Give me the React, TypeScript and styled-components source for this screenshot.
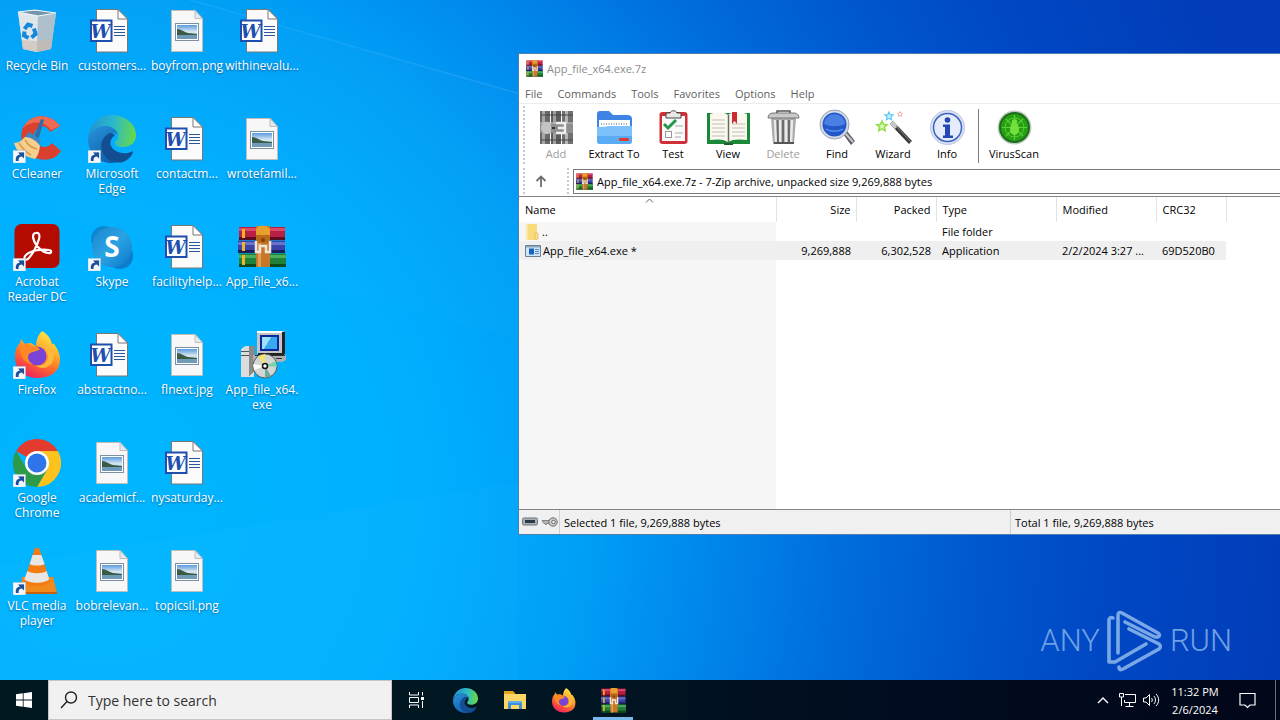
import React from "react";
import styled, { createGlobalStyle, css } from "styled-components";

const uiFont = '"Open Sans", "Noto Sans", sans-serif';

const GlobalStyle = createGlobalStyle`
  *, *::before, *::after { box-sizing: border-box; }
  html, body, #root { height: 100%; margin: 0; }
  body { font-family: ${uiFont}; font-size: 11px; color: #000; overflow: hidden; }
  button, input { font: inherit; color: inherit; }
  button { border: 0; padding: 0; background: none; cursor: default; }
  svg { display: block; flex: none; }
`;

const Screen = styled.div`
  display: flex;
  flex-direction: column;
  height: 100vh;
`;

const Desktop = styled.main`
  position: relative;
  flex: 1;
  min-height: 0;
  overflow: hidden;
  background: radial-gradient(
    ellipse 1300px 1400px at 8% 74%,
    #00b6ff 0%,
    #00b0ff 24%,
    #009ff6 37%,
    #0086eb 47%,
    #006ddd 57%,
    #0058cf 67%,
    #0048c5 77%,
    #023cb8 92%
  );
`;

const Beams = styled.svg`
  position: absolute;
  inset: 0;
  width: 100%;
  height: 100%;
`;

/* Desktop icons */

const IconGrid = styled.div`
  position: relative;
  display: grid;
  grid-auto-flow: column;
  grid-template-rows: repeat(6, 108px);
  grid-auto-columns: 74px;
  column-gap: 1px;
  justify-content: start;
`;

const DesktopItem = styled.button`
  display: flex;
  flex-direction: column;
  align-items: center;
  justify-content: flex-start;
  gap: 3px;
  padding-top: 7px;
`;

const DesktopLabel = styled.span`
  color: #fff;
  font-size: 12px;
  line-height: 15px;
  text-align: center;
  white-space: pre;
  text-shadow: 0 1px 2px rgba(0, 40, 90, 0.6);
`;

/* Archive window */

const Window = styled.section`
  position: absolute;
  top: 53px;
  left: 518px;
  right: 0;
  height: 482px;
  display: flex;
  flex-direction: column;
  background: #fff;
  border: solid #4f7fae;
  border-width: 1px 0 1px 1px;
`;

const TitleBar = styled.header`
  display: flex;
  align-items: center;
  gap: 4px;
  height: 29px;
  padding-left: 7px;
  color: #8b8b8b;
`;

const Title = styled.h1`
  margin: 0;
  font-size: 11px;
  font-weight: 400;
`;

const MenuBar = styled.nav`
  display: flex;
  gap: 15px;
  height: 21px;
  padding-left: 6px;
  border-bottom: 1px solid #ededed;
  color: #5f5f5f;
`;

const Tools = styled.div`
  display: flex;
  height: 62px;
  padding-left: 4px;
`;

const Grip = styled.span`
  flex: none;
  width: 2px;
  margin: 2px 0 0;
  background: repeating-linear-gradient(#c3cbd2 0 2px, transparent 2px 4px);
`;

const ToolList = styled.div`
  display: flex;
  padding: 5px 0 0 2px;
`;

const Tool = styled.button<{ $width: number }>`
  display: flex;
  flex-direction: column;
  align-items: center;
  width: ${(p) => p.$width}px;
  line-height: 16px;
  white-space: nowrap;
  &:disabled { color: #9d9d9d; }
`;

const ToolRule = styled.span`
  width: 1px;
  height: 54px;
  margin-left: 9px;
  background: #7d7d7d;
`;

const AddressRow = styled.div`
  display: flex;
  height: 30px;
  padding-left: 4px;
`;

const UpButton = styled.button`
  display: grid;
  place-items: center;
  width: 32px;
  margin-right: 10px;
`;

const AddressBox = styled.label`
  display: flex;
  flex: 1;
  align-items: center;
  gap: 4px;
  height: 25px;
  margin: 3px 0 0 4px;
  padding-left: 2px;
  border: 1px solid #7a7a7a;
  border-right: 0;
`;

const AddressInput = styled.input`
  flex: 1;
  min-width: 0;
  border: 0;
  padding: 0;
  outline: 0;
  background: none;
`;

const ListPane = styled.div`
  flex: 1;
  min-height: 0;
  border: solid #7f858b;
  border-width: 1px 0;
  background: linear-gradient(#f6f6f6, #f6f6f6) 0 25px / 257px 100% no-repeat #fff;
`;

const FileTable = styled.table`
  width: 707px;
  table-layout: fixed;
  border-collapse: collapse;
`;

const Col = styled.col<{ $width: number }>`
  width: ${(p) => p.$width}px;
`;

const cellText = css<{ $right?: boolean }>`
  padding: 0 5px 0 6px;
  font-weight: 400;
  text-align: ${(p) => (p.$right ? "right" : "left")};
  white-space: nowrap;
`;

const HeadCell = styled.th<{ $right?: boolean }>`
  ${cellText}
  position: relative;
  height: 25px;
  border-right: 1px solid #e2e2e2;
  background: #fff;
`;

const SortMark = styled.svg`
  position: absolute;
  top: 1px;
  left: 49%;
`;

const Row = styled.tr<{ $selected?: boolean }>`
  height: 19px;
  background: ${(p) => (p.$selected ? "#efefef" : "transparent")};
`;

const Cell = styled.td<{ $right?: boolean }>`
  ${cellText}
`;

const FileName = styled.span`
  display: flex;
  align-items: center;
  gap: 2px;
`;

const StatusBar = styled.footer`
  display: flex;
  align-items: stretch;
  height: 24px;
  background: #f0f0f0;
  line-height: 26px;
`;

const StatusIcons = styled.span`
  display: flex;
  align-items: center;
  gap: 3px;
  width: 41px;
  padding-left: 3px;
  border-right: 1px solid #d0d0d0;
`;

const StatusText = styled.span<{ $width?: number }>`
  width: ${(p) => (p.$width ? `${p.$width}px` : "auto")};
  padding-left: 4px;
  border-right: ${(p) => (p.$width ? "1px solid #d0d0d0" : "0")};
`;

/* Watermark */

const Watermark = styled.div`
  position: absolute;
  right: 48px;
  bottom: 8px;
  display: flex;
  align-items: center;
  gap: 7px;
  color: #6fa0e4;
  font-family: Roboto, "Liberation Sans", sans-serif;
  font-size: 31px;
  font-weight: 300;
  line-height: 62px;
`;

/* Taskbar */

const Taskbar = styled.footer`
  display: flex;
  height: 40px;
  background: linear-gradient(90deg, #021820, #011722 40%, #010c20 70%, #020719);
  color: #fff;
`;

const StartButton = styled.button`
  display: grid;
  place-items: center;
  width: 48px;
`;

const SearchBox = styled.label`
  display: flex;
  align-items: center;
  gap: 10px;
  width: 344px;
  padding-left: 11px;
  border: 1px solid #c4c6c7;
  background: #f1f1f1;
  color: #222;
`;

const SearchInput = styled.input`
  flex: 1;
  min-width: 0;
  border: 0;
  padding: 0;
  outline: 0;
  background: none;
  font-size: 14px;
  &::placeholder { color: #333; opacity: 1; }
`;

const TaskButton = styled.button<{ $active?: boolean }>`
  display: grid;
  place-items: center;
  width: 49px;
  border: solid transparent;
  border-width: 3px 4px;
  ${(p) =>
    p.$active &&
    css`
      width: 40px;
      margin-left: 5px;
      border-width: 3px 0;
      border-bottom-color: #76b9ed;
    `}
`;

const Tray = styled.div`
  display: flex;
  margin-left: auto;
`;

const TrayButton = styled.button<{ $width: number }>`
  display: grid;
  place-items: center;
  width: ${(p) => p.$width}px;
`;

const Clock = styled.button`
  width: 64px;
  padding-top: 2px;
  line-height: 18px;
  white-space: pre;
`;

const PeekButton = styled.button`
  width: 5px;
  margin-left: 8px;
  border-left: 1px solid #6a6f7b;
`;

/* Drawings */

const Shortcut = () => (
  <g>
    <rect x="0" y="35.500" width="12.500" height="12.500" fill="#f4f8fc" stroke="#b5c7d8" strokeWidth=".6" />
    <path d="M3 46c-.7-4 .8-6 3.600-6.300V37.800h4.500v4.800l-1.700-1.300C6.500 41.600 5.200 43 5.600 46z" fill="#1c4f9c" />
    <path d="M5 37.500h6v6z" fill="#1c4f9c" />
  </g>
);

const RecycleBin = () => (
  <svg width="48" height="48" viewBox="0 0 48 48">
    <path d="M5 5l17-2 21 3-5 36-14 3-14-3z" fill="#b9cfdd" />
    <path d="M5 5l20 3-1 37-14-3z" fill="#dfe6ea" />
    <path d="M25 8l18-2-5 36-14 3z" fill="#adc0cc" />
    <path d="M5 5l17-2 21 3-18 3z" fill="#7496aa" stroke="#f3f8fb" strokeWidth="1.200" />
    <path d="M8.500 33l15.500 1 15-2-1.500 10-13.500 3-14-3z" fill="#cbb9aa" opacity=".6" />
    <g fill="none" stroke="#1688dc" strokeWidth="4">
      <path d="M11.500 22l3.500-4.500 4.500 1.500" />
      <path d="M21 21.500l1.500 5.500-4 3.500" />
      <path d="M15.500 31l-4.500-2.500.500-4" />
    </g>
  </svg>
);

const CCleaner = () => (
  <svg width="48" height="48" viewBox="0 0 48 48">
    <path d="M47 11C40 2 30-1 20 3 9 8 6 19 10 30s17 17 27 14c5-1 8-4 11-8l-9-8c-4 5-10 5-14 1-5-5-5-12-1-15 5-4 10-3 13 3z" fill="#d9402f" />
    <path d="M47 11C40 2 30-1 20 3c-5 2-8 6-10 10 8-7 20-8 28 2z" fill="#ee6a50" />
    <path d="M28 4l3 1-7 24-5-2z" fill="#2e6da6" />
    <path d="M16 17c4 2 9 5 12 9l-3 4-13-8z" fill="#3c87c2" />
    <path d="M12 22c6 0 12 4 15 9-1 6-2 10-5 13C9 41 3 36 1 28c5 0 8-3 11-6z" fill="#f4cf8d" />
    <path d="M6 28c3 5 7 9 12 12M12 25c3 5 7 8 12 9" stroke="#d69c4c" strokeWidth="1.500" fill="none" />
    <Shortcut />
  </svg>
);

const EdgeArt = () => (
  <>
    <defs>
      <linearGradient id="edgeTop" x1="0" y1=".4" x2="1" y2=".5">
        <stop offset="0" stopColor="#2492cf" />
        <stop offset=".5" stopColor="#29b8cd" />
        <stop offset="1" stopColor="#66d948" />
      </linearGradient>
      <linearGradient id="edgeLeft" x1="0" y1="0" x2=".6" y2="1">
        <stop offset="0" stopColor="#2a94db" />
        <stop offset="1" stopColor="#0f5fae" />
      </linearGradient>
    </defs>
    <path d="M0 23C1 10 11 0 24 0s24 9 24 20c0 8-6 12-13 12-6 0-8-2-8-4s3-3 3-7c0-6-6-10-13-10C9 11 3 15 0 23z" fill="url(#edgeTop)" />
    <path d="M0 24C2 16 9 11 17 11c7 0 12 4 13 9-3-3-8-3-11 0-4 4-4 11 0 17 3 5 8 8 14 8-3 2-6 3-9 3C11 48 0 38 0 24z" fill="url(#edgeLeft)" />
    <path d="M20 19c-6 4-8 11-6 17 3 9 13 13 21 11 5-2 9-6 10-10 0-1-1-1-2 0-8 3-17 0-20-6-2-5 1-8 4-11-2-2-5-3-7-1z" fill="#134e92" />
  </>
);

const EdgeIcon = () => (
  <svg width="48" height="48" viewBox="0 0 48 48">
    <EdgeArt />
    <Shortcut />
  </svg>
);

const EdgeSmall = () => (
  <svg width="25" height="25" viewBox="0 0 48 48">
    <EdgeArt />
  </svg>
);

const Acrobat = () => (
  <svg width="48" height="48" viewBox="0 0 48 48">
    <rect x="1.500" y="1" width="45" height="44" rx="7" fill="#b30b00" />
    <path d="M23 10c3-1 4 2 3 6-2 8-8 17-11 20-3 2-5-1-2-4 5-5 16-6 23-5 3 0 3 4-1 3-7-1-14-9-15-16 0-2 1-4 3-4z" fill="none" stroke="#fff" strokeWidth="2.200" />
    <Shortcut />
  </svg>
);

const Skype = () => (
  <svg width="48" height="48" viewBox="0 0 48 48">
    <defs>
      <linearGradient id="skype" x1="0" y1="0" x2="1" y2="1">
        <stop offset="0" stopColor="#1b86cc" />
        <stop offset=".5" stopColor="#2ba3e3" />
        <stop offset="1" stopColor="#0a79c9" />
      </linearGradient>
    </defs>
    <circle cx="16" cy="16" r="13" fill="#0f86d2" />
    <circle cx="32" cy="33" r="13" fill="#0c7dcc" />
    <circle cx="24" cy="24" r="20" fill="url(#skype)" />
    <text x="24" y="34" textAnchor="middle" fontFamily="Open Sans, sans-serif" fontWeight="700" fontSize="28" fill="#fff">S</text>
    <Shortcut />
  </svg>
);

const FirefoxArt = () => (
  <>
    <defs>
      <linearGradient id="fox" x1=".8" y1="0" x2=".3" y2="1">
        <stop offset="0" stopColor="#fff04a" />
        <stop offset=".35" stopColor="#ffb02c" />
        <stop offset=".65" stopColor="#ff6a2b" />
        <stop offset="1" stopColor="#ec1f63" />
      </linearGradient>
    </defs>
    <path d="M29 0c7 4 9 9 10 13 2-1 3 1 4 3 4 6 5 13 3 19-3 8-11 12-21 12C12 47 2 39 2 26c0-7 2-11 5-14l1-4 4 5c2-1 4-1 6-1l5 3c0-6 2-11 6-15z" fill="url(#fox)" />
    <circle cx="24" cy="25" r="9.500" fill="#7a43d6" />
    <path d="M7 16c3-3 8-4 12-1 4 0 6 1 8 3-3 3-8 2-11 5-2 3-1 8 4 10-8 0-13-7-13-17z" fill="#ff8a25" />
    <path d="M24 15c6-1 11 4 11 10 0 7-6 11-13 9 8 7 19 1 19-9 0-8-8-14-17-10z" fill="#ffb83a" />
  </>
);

const Firefox = () => (
  <svg width="48" height="48" viewBox="0 0 48 48">
    <FirefoxArt />
    <Shortcut />
  </svg>
);

const FirefoxSmall = () => (
  <svg width="25" height="25" viewBox="0 0 48 48">
    <FirefoxArt />
  </svg>
);

const Chrome = () => (
  <svg width="48" height="48" viewBox="0 0 48 48">
    <path d="M24 24L3.200 12A24 24 0 0 1 44.800 12z" fill="#e33b2e" />
    <path d="M24 12h20.800A24 24 0 0 1 24 48l10.400-18z" fill="#fcc31e" />
    <path d="M3.200 12A24 24 0 0 0 24 48l10.400-18H13.600z" fill="#2c9a47" />
    <circle cx="24" cy="24" r="12" fill="#fff" />
    <circle cx="24" cy="24" r="9.500" fill="#2f74e8" />
    <Shortcut />
  </svg>
);

const Vlc = () => (
  <svg width="48" height="48" viewBox="0 0 48 48">
    <path d="M9 30h31l4 16H8z" fill="#f08a1c" />
    <path d="M8 45h36v2H8z" fill="#c8600c" />
    <path d="M22 1h4l11 33c-2 7-24 7-26 0z" fill="#f57c12" />
    <path d="M19.600 8h8.800l3.200 9c-3 2-12 2-15 0z" fill="#e9e6e3" />
    <path d="M14.500 24c4 3 15 3 19 0l2.800 8c-4 5-21 5-25 0z" fill="#e9e6e3" />
    <Shortcut />
  </svg>
);

const WordFile = () => (
  <svg width="48" height="48" viewBox="0 0 48 48">
    <path d="M8.500 2.500h21.500l9.500 9.500v33h-31z" fill="#fbfbfb" stroke="#777" />
    <path d="M30 2.500v9.500h9.500z" fill="#fff" stroke="#777" />
    <path d="M26 19.500h11M26 22.500h11M26 25.500h11M26 28.500h11" stroke="#2b579a" />
    <rect x="3" y="13.500" width="20.500" height="20.500" fill="#fff" stroke="#1f4fae" strokeWidth="2" />
    <text x="12.500" y="30.500" textAnchor="middle" fontFamily="DejaVu Serif, serif" fontWeight="700" fontStyle="italic" fontSize="18" fill="#1f4fae">W</text>
  </svg>
);

const ImageFile = () => (
  <svg width="48" height="48" viewBox="0 0 48 48">
    <defs>
      <linearGradient id="photoSky" x1="0" y1="0" x2="0" y2="1">
        <stop offset="0" stopColor="#5a9be0" />
        <stop offset=".5" stopColor="#dceaf2" />
        <stop offset="1" stopColor="#5e88a8" />
      </linearGradient>
    </defs>
    <path d="M8.500 3.500h23.500l7.500 8v33h-31z" fill="#f7f7f7" stroke="#c2bdb8" />
    <path d="M32 3.500v8h7.500z" fill="#dfeaf2" stroke="#c2bdb8" />
    <rect x="12.500" y="16.500" width="23" height="17" fill="#fff" stroke="#7d8fa0" />
    <rect x="14" y="18" width="20" height="14" fill="url(#photoSky)" />
    <path d="M14 22c4 0 7 3 11 4l9 1v1H14z" fill="#3a5c46" />
    <path d="M14 28h20v4H14z" fill="#6f9ab8" />
  </svg>
);

const RarArt = () => (
  <>
    <path d="M1 4h46v13H1z" fill="#b81f42" />
    <path d="M1 5h46v3H1z" fill="#dc4a68" />
    <path d="M1 14h46v3H1z" fill="#5d0d20" />
    <path d="M0 17.500h47v12.500H0z" fill="#3a43a8" />
    <path d="M0 19h47v3H0z" fill="#6a72cc" />
    <path d="M0 27h47v3H0z" fill="#1b1f5a" />
    <path d="M1 30.500h47v13.500H1z" fill="#1f8238" />
    <path d="M1 32h47v3H1z" fill="#4fae5c" />
    <path d="M1 41h47v3H1z" fill="#0c4a1d" />
    <path d="M4 6h3v9H4zM4 19h3v9H4zM4 32h3v10H4z" fill="#f0b428" />
    <path d="M18 3h14v41H18z" fill="#c8772a" />
    <path d="M20 3h3v41h-3z" fill="#e2a055" />
    <path d="M18 8c0-7 14-7 14 0v9H18z" fill="#e8a02c" />
    <path d="M18 12h14v8H18z" fill="#b86a18" />
    <path d="M18 18v11h4v-6h6v6h4V18" fill="none" stroke="#eee6dc" strokeWidth="2.500" />
    <circle cx="25" cy="17" r="2" fill="#8a3c10" />
  </>
);

const RarIcon = ({ size }: { size: number }) => (
  <svg width={size} height={size} viewBox={size === 48 ? "0 0 48 48" : "0 3 48 42"} preserveAspectRatio="none">
    <RarArt />
  </svg>
);

const Installer = () => (
  <svg width="48" height="48" viewBox="0 0 48 48" shapeRendering="crispEdges">
    <path d="M3 18l5-3h8v31H3z" fill="#dcdcdc" />
    <path d="M11 15h6v24l-6 7z" fill="#8a8a8a" />
    <path d="M3 20h8M3 24h8" stroke="#555" />
    <path d="M19 0h27v23H19z" fill="#c4c4c4" />
    <path d="M19 0h25v2H19z" fill="#fff" />
    <path d="M44 1h3v22h-3zM20 22h26v2H20z" fill="#222" />
    <path d="M22 4h19v16H22z" fill="#0a2a9c" />
    <path d="M24 6h15v12H24z" fill="#38a8f0" />
    <path d="M24 6h9l-7 12h-2z" fill="#9fe0fa" />
    <path d="M15 24h33v5l-4 2H15z" fill="#b0b0b0" />
    <path d="M17 24h30v1H17zM38 27h6v1h-6z" fill="#333" />
    <g shapeRendering="auto">
      <circle cx="27" cy="35" r="12" fill="#d2d7d6" stroke="#555" />
      <path d="M27 35L20 25l7-2z" fill="#f1e66a" />
      <path d="M27 35l11-5 1 6z" fill="#7cd3b0" />
      <path d="M27 35l6 10-6 2z" fill="#6ea9a0" />
      <path d="M27 35l-11 4-1-6z" fill="#fff" />
      <circle cx="27" cy="35" r="2.500" fill="#fff" stroke="#111" strokeWidth="1.500" />
    </g>
  </svg>
);

const AddArt = () => (
  <svg width="37" height="37" viewBox="0 0 37 37">
    <path d="M2 2h10v33H2z" fill="#686868" />
    <path d="M4 2h3v33H4z" fill="#a8a8a8" />
    <path d="M13 2h10v33H13z" fill="#5c5c5c" />
    <path d="M15 2h3v33h-3z" fill="#a0a0a0" />
    <path d="M24 2h11v33H24z" fill="#707070" />
    <path d="M27 2h3v33h-3z" fill="#b5b5b5" />
    <path d="M3 6h32M3 31h32" stroke="#474747" strokeWidth="1" />
    <path d="M2 14h33v10H2z" fill="#8e8e8e" />
    <path d="M2 14h33" stroke="#ccc" />
    <path d="M3 19c0-7 8-8 10-4v8c-3 4-10 2-10-4z" fill="#c4c4c4" />
    <path d="M18 14h9v10h-9M20 19h6" fill="none" stroke="#efefef" strokeWidth="2.500" />
    <path d="M14 19h3" stroke="#333" strokeWidth="2" />
  </svg>
);

const ExtractArt = () => (
  <svg width="37" height="37" viewBox="0 0 37 37">
    <path d="M1 5c0-2 1-3 3-3h9l4 4h14c3 0 5 1 5 4v15H1z" fill="#3f83e6" />
    <path d="M3 11h31v14H3z" fill="#fff" />
    <path d="M5 15h27" stroke="#9aa9bb" strokeWidth="2" strokeDasharray="1 1.500" />
    <path d="M1 18c10 0 10-1 13-1h22v15c0 2-1 3-3 3H4c-2 0-3-1-3-3z" fill="#7cc1fa" />
    <path d="M1 27h35v5c0 2-1 3-3 3H4c-2 0-3-1-3-3z" fill="#5babf4" />
    <rect x="23" y="29" width="10" height="3" rx="1" fill="#e03a2e" />
  </svg>
);

const TestArt = () => (
  <svg width="37" height="37" viewBox="0 0 37 37">
    <rect x="4.500" y="3" width="28" height="32" rx="3" fill="#cf2f36" />
    <path d="M7 7h23v25H7z" fill="#fafafa" />
    <path d="M11 4h4c1-3 6-3 7 0h4v5H11z" fill="#e8e8e8" stroke="#444" />
    <path d="M9 15l4 4 8-8" fill="none" stroke="#22974a" strokeWidth="3" />
    <rect x="10.500" y="22.500" width="6" height="6" fill="#fff" stroke="#999" />
    <path d="M20 17h8M20 24h8M20 28h6" stroke="#aaa" />
  </svg>
);

const ViewArt = () => (
  <svg width="43" height="37" viewBox="0 0 43 37">
    <path d="M0 4h43v31H0z" fill="#1a8a3a" />
    <path d="M3 5c7-2 14-2 18 1 4-3 12-3 19-1v26c-7-1-15-1-19 2-4-3-11-3-18-2z" fill="#fbf8f0" />
    <path d="M21.500 6v28" stroke="#6b6b60" strokeWidth="1.500" />
    <path d="M5 11h13M5 15h13M5 19h13M5 23h13M5 27h13M25 15h13M25 19h13M25 23h13M25 27h13" stroke="#c3bfb5" />
    <path d="M25 3h5v12l-2.500-3L25 15z" fill="#cb2b35" />
    <path d="M17 34h9v2h-9z" fill="#225c30" />
  </svg>
);

const DeleteArt = () => (
  <svg width="37" height="37" viewBox="0 0 37 37">
    <path d="M6 9h25l-2 26H8z" fill="#a9a9a9" />
    <path d="M10 11l1 22M15 11v22M21 11v22M27 11l-1 22" stroke="#e9e9e9" strokeWidth="2.500" />
    <path d="M12.500 11l.5 22M18 11v22M24 11v22" stroke="#6b6b6b" strokeWidth="2" />
    <path d="M3 9c0-3 2-5 5-5h21c3 0 5 2 5 5z" fill="#c9c9c9" stroke="#777" />
    <path d="M12 4V2h13v2" fill="none" stroke="#555" strokeWidth="1.500" />
    <path d="M9 34h20" stroke="#555" strokeWidth="2" />
  </svg>
);

const FindArt = () => (
  <svg width="37" height="37" viewBox="0 0 37 37">
    <path d="M24 25l4-3 8 10-4 4z" fill="#5c6066" />
    <path d="M26 24l8 9" stroke="#c7cbd0" strokeWidth="2" />
    <circle cx="15.500" cy="15.500" r="14.500" fill="#d5dce6" stroke="#98a4b3" />
    <circle cx="15.500" cy="15.500" r="12" fill="#2557c8" />
    <path d="M5 15c1-13 20-13 21 0-6 3-15 3-21 0z" fill="#4a7fe4" />
    <path d="M7 20c4 3 13 3 17 0" fill="none" stroke="#5a92f0" strokeWidth="1.500" />
  </svg>
);

const star = "M0-5l1.500 3.300 3.600.4-2.700 2.400.8 3.600L0 2.900l-3.200 1.800.8-3.600-2.700-2.400 3.600-.4z";

const WizardArt = () => (
  <svg width="37" height="37" viewBox="0 0 37 37">
    <path d="M15 15l3-3 19 20-3 3z" fill="#3a3a3c" />
    <path d="M15 15l3-3 5 5-3 3z" fill="#c9c9cc" />
    <path d="M21 17l15 16" stroke="#85868a" />
    <g fill="#fff" strokeWidth="1.500">
      <path d={star} transform="translate(7 17)" stroke="#8fdd48" fill="#d8f8b4" />
      <path d={star} transform="translate(14 7) scale(.8)" stroke="#5cc8f4" fill="#c8effc" />
      <path d={star} transform="translate(25 5) scale(.5)" stroke="#f49a8e" />
    </g>
  </svg>
);

const InfoArt = () => (
  <svg width="37" height="37" viewBox="0 0 37 37">
    <circle cx="18.500" cy="18.500" r="17" fill="#d8e0f2" stroke="#bcc8e2" />
    <circle cx="18.500" cy="18.500" r="14" fill="#e4ecfb" stroke="#3e62c0" strokeWidth="1.500" />
    <circle cx="18.500" cy="11" r="2.800" fill="#2348b4" />
    <path d="M14 15.500h7v11h3V29H14v-2.500h2V18h-2z" fill="#2348b4" />
  </svg>
);

const VirusArt = () => (
  <svg width="37" height="37" viewBox="0 0 37 37">
    <circle cx="18.500" cy="18.500" r="17" fill="#c3ccc3" />
    <circle cx="18.500" cy="18.500" r="15.500" fill="#1b6e1c" />
    <circle cx="18.500" cy="18.500" r="13.500" fill="#25a012" />
    <path d="M18.500 6v25M6 18.500h25M10 10l17 17M27 10L10 27" stroke="#5fd036" strokeWidth="1.200" />
    <circle cx="18.500" cy="18.500" r="9.500" fill="none" stroke="#58c834" />
    <ellipse cx="18.500" cy="20" rx="4.500" ry="6" fill="#74e03e" />
    <circle cx="18.500" cy="13" r="2.700" fill="#74e03e" />
  </svg>
);

const FolderSmall = () => (
  <svg width="15" height="16" viewBox="0 0 15 16">
    <path d="M1 0h11v16H1z" fill="#f8dc7c" />
    <path d="M1 0h2v16H1z" fill="#fbe9a8" />
    <path d="M10 9h3v6h-3z" fill="#fbe28e" stroke="#e0b84e" strokeWidth=".7" />
  </svg>
);

const ExeSmall = () => (
  <svg width="16" height="16" viewBox="0 0 16 16">
    <path d="M.5 2.500h15v11H.5z" fill="#cfe6f8" stroke="#6d7f90" />
    <path d="M1 3h14v1.500H1z" fill="#8ba6bd" />
    <path d="M4 5.500h5v6H4z" fill="#1a62c0" />
    <path d="M10 6.500h4M10 8.500h4M10 10.500h4" stroke="#4c8ccc" />
  </svg>
);

const DriveGlyph = () => (
  <svg width="16" height="10" viewBox="0 0 16 10">
    <rect x=".5" y="1" width="15" height="7" rx="1.500" fill="#a9b0b6" stroke="#6d757c" />
    <path d="M3 3h10v3H3z" fill="#2c3a42" />
  </svg>
);

const KeyGlyph = () => (
  <svg width="17" height="12" viewBox="0 0 17 12">
    <path d="M1 4.500h8v3H6l-1 1.500-1-1.500H3z" fill="#b5b5b5" stroke="#6f6f6f" strokeWidth=".8" />
    <circle cx="12" cy="6" r="4.200" fill="#cfcfcf" stroke="#6a6a6a" />
    <circle cx="12.500" cy="6" r="1.800" fill="#f0f0f0" stroke="#6a6a6a" />
  </svg>
);

const AnyRunMark = () => (
  <svg width="56" height="62" viewBox="0 0 56 62" fill="none" stroke="#7aa8e6" strokeWidth="3.600" strokeLinejoin="round" strokeLinecap="round">
    <path d="M6 8c-2-1-4 0-4 2v42l6 0 31-18" />
    <path d="M11 43V6c0-4 2-4 4-3l36 20c2 1 2 3 0 4l-3 0L18 12" />
    <path d="M18 14v24" opacity="0" />
    <path d="M22 19l30 15c2 2 2 3 0 5L16 59c-2 1-4 1-4-2" />
  </svg>
);

const desktopItems: { label: string; icon: React.ReactNode }[] = [
  { label: "Recycle Bin", icon: <RecycleBin /> },
  { label: "CCleaner", icon: <CCleaner /> },
  { label: "Acrobat\nReader DC", icon: <Acrobat /> },
  { label: "Firefox", icon: <Firefox /> },
  { label: "Google\nChrome", icon: <Chrome /> },
  { label: "VLC media\nplayer", icon: <Vlc /> },
  { label: "customers...", icon: <WordFile /> },
  { label: "Microsoft\nEdge", icon: <EdgeIcon /> },
  { label: "Skype", icon: <Skype /> },
  { label: "abstractno...", icon: <WordFile /> },
  { label: "academicf...", icon: <ImageFile /> },
  { label: "bobrelevan...", icon: <ImageFile /> },
  { label: "boyfrom.png", icon: <ImageFile /> },
  { label: "contactm...", icon: <WordFile /> },
  { label: "facilityhelp...", icon: <WordFile /> },
  { label: "flnext.jpg", icon: <ImageFile /> },
  { label: "nysaturday...", icon: <WordFile /> },
  { label: "topicsil.png", icon: <ImageFile /> },
  { label: "withinevalu...", icon: <WordFile /> },
  { label: "wrotefamil...", icon: <ImageFile /> },
  { label: "App_file_x6...", icon: <RarIcon size={48} /> },
  { label: "App_file_x64.\nexe", icon: <Installer /> },
];

const tools = [
  { label: "Add", width: 58, art: <AddArt />, disabled: true },
  { label: "Extract To", width: 58, art: <ExtractArt /> },
  { label: "Test", width: 60, art: <TestArt /> },
  { label: "View", width: 50, art: <ViewArt /> },
  { label: "Delete", width: 60, art: <DeleteArt />, disabled: true },
  { label: "Find", width: 48, art: <FindArt /> },
  { label: "Wizard", width: 64, art: <WizardArt /> },
  { label: "Info", width: 44, art: <InfoArt /> },
];

const ArchiveWindow = () => (
  <Window>
    <TitleBar>
      <RarIcon size={17} />
      <Title>App_file_x64.exe.7z</Title>
    </TitleBar>
    <MenuBar>
      {["File", "Commands", "Tools", "Favorites", "Options", "Help"].map((m) => (
        <button key={m}>{m}</button>
      ))}
    </MenuBar>
    <Tools>
      <Grip />
      <ToolList>
        {tools.map((t) => (
          <Tool key={t.label} $width={t.width} disabled={t.disabled}>
            {t.art}
            {t.label}
          </Tool>
        ))}
        <ToolRule />
        <Tool $width={70}>
          <VirusArt />
          VirusScan
        </Tool>
      </ToolList>
    </Tools>
    <AddressRow>
      <Grip />
      <UpButton aria-label="Up one level">
        <svg width="12" height="12" viewBox="0 0 12 12" fill="none" stroke="#6e6e6e" strokeWidth="1.800">
          <path d="M6 12V1.500M1.500 6L6 1.500 10.500 6" />
        </svg>
      </UpButton>
      <Grip />
      <AddressBox>
        <RarIcon size={17} />
        <AddressInput
          readOnly
          aria-label="Archive path"
          value="App_file_x64.exe.7z - 7-Zip archive, unpacked size 9,269,888 bytes"
        />
      </AddressBox>
    </AddressRow>
    <ListPane>
      <FileTable>
        <colgroup>
          {[257, 80, 80, 120, 100, 70].map((w, i) => (
            <Col key={i} $width={w} />
          ))}
        </colgroup>
        <thead>
          <tr>
            <HeadCell>
              Name
              <SortMark width="9" height="5" viewBox="0 0 9 5" fill="none" stroke="#666">
                <path d="M1 4.500l3.500-3.500L8 4.500" />
              </SortMark>
            </HeadCell>
            <HeadCell $right>Size</HeadCell>
            <HeadCell $right>Packed</HeadCell>
            <HeadCell>Type</HeadCell>
            <HeadCell>Modified</HeadCell>
            <HeadCell>CRC32</HeadCell>
          </tr>
        </thead>
        <tbody>
          <Row>
            <Cell>
              <FileName><FolderSmall />..</FileName>
            </Cell>
            <Cell />
            <Cell />
            <Cell>File folder</Cell>
            <Cell />
            <Cell />
          </Row>
          <Row $selected>
            <Cell>
              <FileName><ExeSmall />App_file_x64.exe *</FileName>
            </Cell>
            <Cell $right>9,269,888</Cell>
            <Cell $right>6,302,528</Cell>
            <Cell>Application</Cell>
            <Cell>2/2/2024 3:27 ...</Cell>
            <Cell>69D520B0</Cell>
          </Row>
        </tbody>
      </FileTable>
    </ListPane>
    <StatusBar>
      <StatusIcons>
        <DriveGlyph />
        <KeyGlyph />
      </StatusIcons>
      <StatusText $width={451}>Selected 1 file, 9,269,888 bytes</StatusText>
      <StatusText>Total 1 file, 9,269,888 bytes</StatusText>
    </StatusBar>
  </Window>
);

export default function App() {
  return (
    <Screen>
      <GlobalStyle />
      <Desktop>
        <Beams viewBox="0 0 1280 680" preserveAspectRatio="none">
          <path d="M180 0L520 92V340L0 200V0z" fill="#fff" opacity=".01" />
          <path d="M190 0L520 94" stroke="#7fd0ff" strokeWidth="1.500" opacity=".16" />
          <path d="M0 566L518 482V680H0z" fill="#fff" opacity=".015" />
        </Beams>
        <IconGrid>
          {desktopItems.map((item) => (
            <DesktopItem key={item.label}>
              {item.icon}
              <DesktopLabel>{item.label}</DesktopLabel>
            </DesktopItem>
          ))}
        </IconGrid>
        <ArchiveWindow />
        <Watermark>
          <span>ANY</span>
          <AnyRunMark />
          <span>RUN</span>
        </Watermark>
      </Desktop>
      <Taskbar>
        <StartButton aria-label="Start">
          <svg width="16" height="16" viewBox="0 0 16 16" fill="#fff">
            <path d="M0 2.300L6.800 1.300v6.300H0zM7.600 1.200L16 0v7.600H7.600zM0 8.400h6.800v6.300L0 13.700zM7.600 8.400H16V16l-8.400-1.200z" />
          </svg>
        </StartButton>
        <SearchBox>
          <svg width="18" height="18" viewBox="0 0 18 18" fill="none" stroke="#222" strokeWidth="1.400">
            <circle cx="11" cy="6.500" r="5.500" />
            <path d="M7 10.500L1 17" />
          </svg>
          <SearchInput aria-label="Search" placeholder="Type here to search" />
        </SearchBox>
        <TaskButton aria-label="Task View">
          <svg width="17" height="16" viewBox="0 0 17 16" fill="none" stroke="#fff">
            <path d="M1.500 0v3h9V0M1.500 5.500h9v5h-9zM1.500 16v-3h9v3M14.500 0v3.500M14.500 9v7" />
            <path d="M13 5h3v3h-3z" fill="#fff" stroke="none" />
          </svg>
        </TaskButton>
        <TaskButton aria-label="Microsoft Edge"><EdgeSmall /></TaskButton>
        <TaskButton aria-label="File Explorer">
          <svg width="22" height="19" viewBox="0 0 22 19">
            <path d="M0 0h9l2 2v5H0z" fill="#e5a31f" />
            <path d="M0 3h22v15H0z" fill="#fcd765" />
            <path d="M4 10h14v8H4z" fill="#3f8fd4" />
            <path d="M7 14h8v4H7z" fill="#fcd765" />
            <path d="M4 10h14v2H4z" fill="#5fb0e8" />
          </svg>
        </TaskButton>
        <TaskButton aria-label="Firefox"><FirefoxSmall /></TaskButton>
        <TaskButton aria-label="WinRAR" $active><RarIcon size={25} /></TaskButton>
        <Tray>
          <TrayButton $width={24} aria-label="Show hidden icons">
            <svg width="12" height="8" viewBox="0 0 12 8" fill="none" stroke="#fff" strokeWidth="1.400">
              <path d="M1 7l5-5 5 5" />
            </svg>
          </TrayButton>
          <TrayButton $width={24} aria-label="Network">
            <svg width="17" height="14" viewBox="0 0 17 14" fill="none" stroke="#fff">
              <path d="M6 1.500h10.500v8h-11V7M10.500 10v3M6.500 13.500h8M.5.500h4v3.500h-4zM2.500 4v9" />
            </svg>
          </TrayButton>
          <TrayButton $width={24} aria-label="Volume">
            <svg width="17" height="14" viewBox="0 0 17 14" fill="none" stroke="#fff">
              <path d="M.5 5h2.500l3.500-3.500v11L3 9H.5zM8.500 5c1 1 1 3 0 4M10.800 3c2.200 2 2.200 6 0 8M13 1c3.500 3.500 3.500 8.500 0 12" />
            </svg>
          </TrayButton>
          <Clock>{"11:32 PM\n2/6/2024"}</Clock>
          <TrayButton $width={40} aria-label="Notifications">
            <svg width="17" height="17" viewBox="0 0 17 17" fill="none" stroke="#fff" strokeWidth="1.200">
              <path d="M1 1.500h15v11.500h-5L8.500 15.500 6 13H1z" />
            </svg>
          </TrayButton>
          <PeekButton aria-label="Show desktop" />
        </Tray>
      </Taskbar>
    </Screen>
  );
}
